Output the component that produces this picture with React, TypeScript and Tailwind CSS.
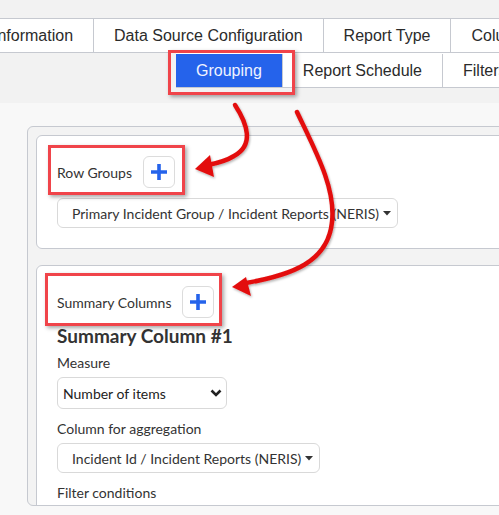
import React from "react";

const Plus = () => (
  <svg width="18" height="18" viewBox="0 0 18 18">
    <line x1="9" y1="1" x2="9" y2="17" stroke="#2563eb" strokeWidth="3.6" />
    <line x1="1" y1="9" x2="17" y2="9" stroke="#2563eb" strokeWidth="3.6" />
  </svg>
);

const Caret = () => (
  <svg width="8" height="5" viewBox="0 0 8 5" className="ml-[4px]">
    <polygon points="0,0 8,0 4,4.6" fill="#333" />
  </svg>
);

const Chevron = () => (
  <svg width="12" height="8" viewBox="0 0 12 8">
    <polyline points="1.5,1.5 6,6 10.5,1.5" fill="none" stroke="#222" strokeWidth="2.6" />
  </svg>
);

export default function App() {
  const tab = "h-[33px] flex items-center px-5 border-r border-[#c6c9d0] text-[16px] text-[#2b2b2b] whitespace-nowrap";
  return (
    <div
      className="relative w-[499px] h-[515px] overflow-hidden bg-[#f8f8f8]"
      style={{ fontFamily: "Lato, 'Noto Sans', sans-serif" }}
    >
      <div className="h-[103px] bg-[#f2f2f2]" style={{ fontFamily: "'Liberation Sans', Arial, sans-serif" }}>
        <div className="h-[18px]" />
        <div className="flex bg-white border-y border-[#c6c9d0] -ml-[27px] w-[560px]">
          <div className={tab}>Information</div>
          <div className={tab}>Data Source Configuration</div>
          <div className={tab}>Report Type</div>
          <div className={tab}>Columns</div>
        </div>
        <div className="flex bg-white border-b border-[#c6c9d0] ml-[176px] w-[360px]">
          <div className="h-[33px] mt-px flex items-center px-5 bg-[#2563eb] text-[16px] text-[#f0f3ff] border-r border-[#c6c9d0]">
            Grouping
          </div>
          <div className={tab + " mt-px"}>Report Schedule</div>
          <div className={tab + " mt-px"}>Filters</div>
        </div>
      </div>

      <div className="ml-[27px] mt-[23px] w-[520px] h-[380px] overflow-hidden border border-[#c6c9d0] rounded-md bg-[#f3f3f3] p-2">
        <div className="border border-[#c6c9d0] rounded-md bg-white px-5 py-5">
          <div className="flex items-center h-[32px]">
            <span className="text-[14px] text-[#333]">Row Groups</span>
            <div className="ml-[11px] w-[32px] h-[32px] rounded-md border border-[#dcdcdc] bg-white flex items-center justify-center">
              <Plus />
            </div>
          </div>
          <div className="mt-[10px] inline-flex items-center h-[30px] pl-[14px] pr-[6px] border border-[#d9d9d9] rounded-md text-[14px] text-[#333]">
            Primary Incident Group / Incident Reports (NERIS)
            <Caret />
          </div>
        </div>

        <div className="mt-4 border border-[#c6c9d0] rounded-md bg-white px-5 pt-5 pb-10">
          <div className="flex items-center h-[32px]">
            <span className="text-[14px] text-[#333]">Summary Columns</span>
            <div className="ml-[11px] w-[32px] h-[32px] rounded-md border border-[#dcdcdc] bg-white flex items-center justify-center">
              <Plus />
            </div>
          </div>
          <div className="mt-[7px] text-[19px] leading-[22px] font-bold text-[#333]">Summary Column #1</div>
          <div className="mt-[6px] text-[14px] leading-[20px] text-[#333]">Measure</div>
          <div className="mt-1 w-[170px] h-[32px] flex items-center justify-between pl-[5px] pr-[4px] border border-[#d9d9d9] rounded-md text-[14px] text-[#222]">
            Number of items
            <Chevron />
          </div>
          <div className="mt-[10px] text-[14px] leading-[20px] text-[#333]">Column for aggregation</div>
          <div className="mt-[4px] inline-flex items-center h-[30px] pl-[14px] pr-[6px] border border-[#d9d9d9] rounded-md text-[14px] text-[#333]">
            Incident Id / Incident Reports (NERIS)
            <Caret />
          </div>
          <div className="mt-[10px] text-[14px] leading-[20px] text-[#333]">Filter conditions</div>
        </div>
      </div>

      {/* annotation boxes */}
      <div className="absolute left-[168px] top-[50px] w-[127px] h-[45px] border-[3px] border-[#f0444a] shadow-[2px_2px_4px_rgba(0,0,0,0.35)]" />
      <div className="absolute left-[48px] top-[145px] w-[137px] h-[50px] border-[3px] border-[#f0444a] shadow-[2px_2px_4px_rgba(0,0,0,0.35)]" />
      <div className="absolute left-[45px] top-[273px] w-[177px] h-[53px] border-[3px] border-[#f0444a] shadow-[2px_2px_4px_rgba(0,0,0,0.35)]" />

      <svg className="absolute left-0 top-0" width="499" height="515" viewBox="0 0 499 515">
        <defs>
          <filter id="sh" x="-20%" y="-20%" width="140%" height="140%">
            <feDropShadow dx="1" dy="1.5" stdDeviation="1.2" floodColor="#000" floodOpacity="0.3" />
          </filter>
        </defs>
        <g filter="url(#sh)">
          <path d="M235 105 C 248 125, 254 145, 234 156 C 226 161, 218 163, 208 165" fill="none" stroke="#e30f0f" strokeWidth="4.5" strokeLinecap="round" />
          <polygon points="195,169 210,155 214,177" fill="#e30f0f" />
          <path d="M297 112 C 315 150, 336 188, 332 222 C 328 262, 292 275, 246 283" fill="none" stroke="#e30f0f" strokeWidth="4.5" strokeLinecap="round" />
          <polygon points="232,287 246,277 251,296" fill="#e30f0f" />
        </g>
      </svg>
    </div>
  );
}
